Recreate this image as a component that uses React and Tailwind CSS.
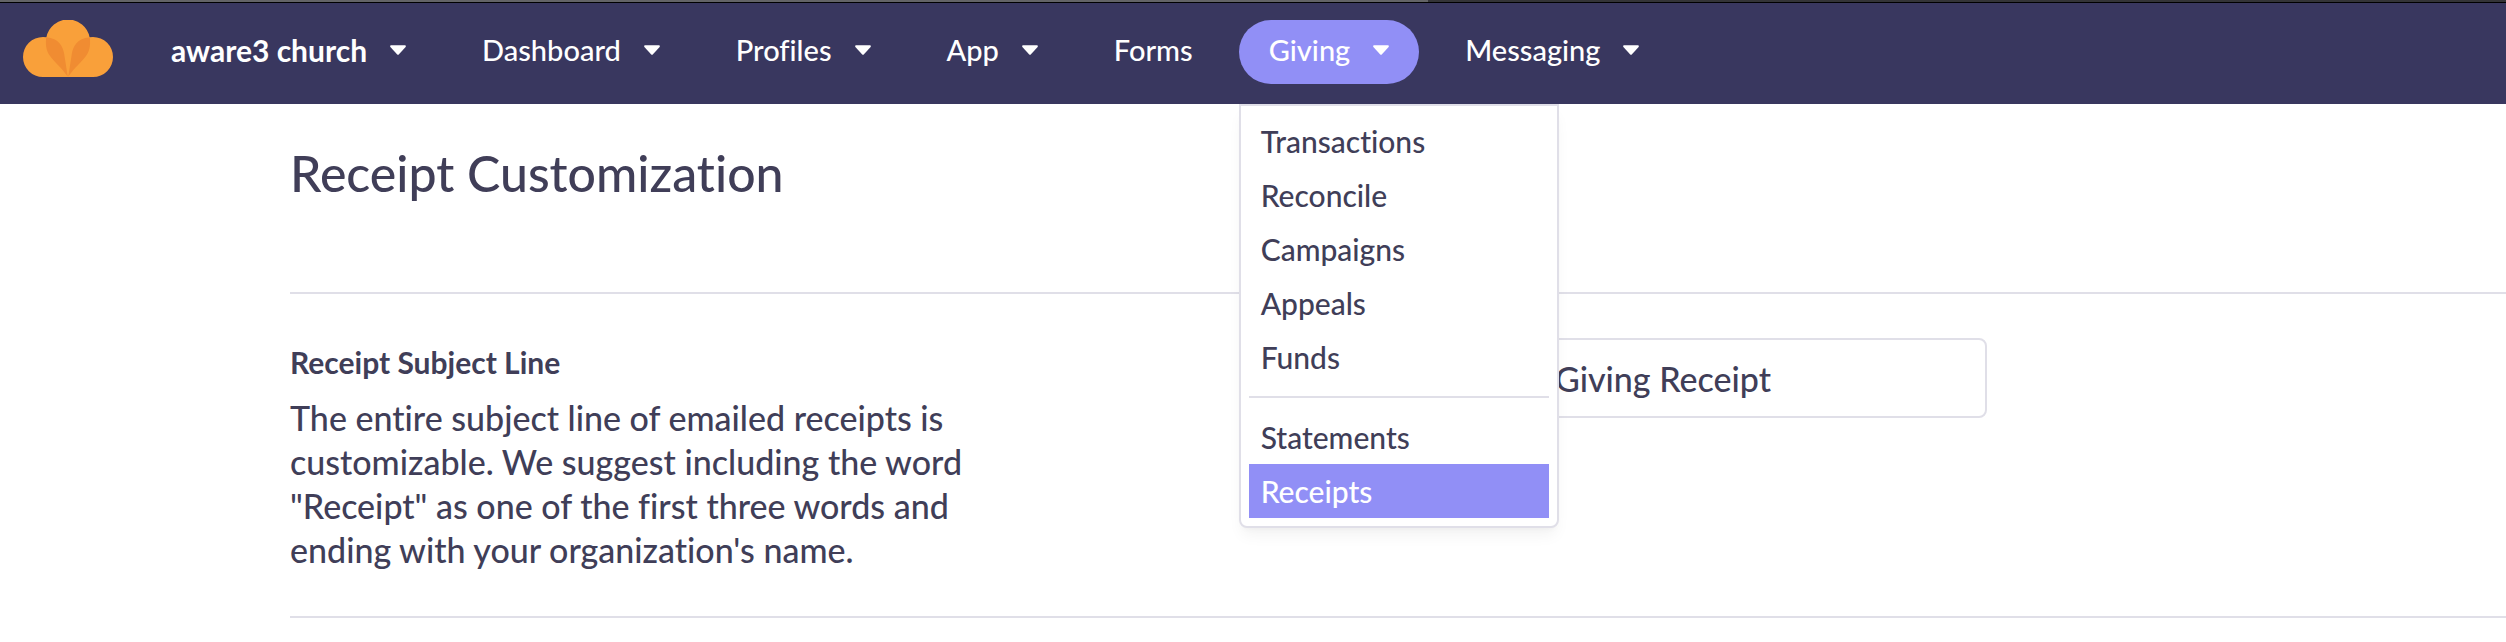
import { useState } from 'react';

const navItems = [
  { label: 'Dashboard', menu: true },
  { label: 'Profiles', menu: true },
  { label: 'App', menu: true },
  { label: 'Forms', menu: false },
  {
    label: 'Giving',
    menu: true,
    groups: [
      ['Transactions', 'Reconcile', 'Campaigns', 'Appeals', 'Funds'],
      ['Statements', 'Receipts'],
    ],
  },
  { label: 'Messaging', menu: true },
];

function Logo() {
  return (
    <svg viewBox="0 0 90 58" className="h-[58px] w-[90px]" aria-hidden="true">
      <path
        d="M20 57a20 20 0 0 1 0-40q1.700 0 3.400.3a22 22 0 0 1 43.200 0q1.700-.3 3.400-.3a20 20 0 0 1 0 40z"
        fill="#f9a03a"
      />
      <path d="M23.200 17.300C36 18 40 27 41.200 34L44.700 56.500C38 47 31 42 26 34.500C23 30 22.500 24 23.200 17.300z" fill="#f08c32" />
      <path d="M66.800 17.300C54 18 50 27 48.800 34L45.300 56.500C52 47 59 42 64 34.500C67 30 67.500 24 66.800 17.300z" fill="#f08c32" />
    </svg>
  );
}

function Caret() {
  return (
    <svg viewBox="0 0 16 10" className="h-[10px] w-4" aria-hidden="true">
      <path d="M1.200.3h13.600c.9 0 1.400 1 .8 1.700L9 9.200a1.400 1.400 0 0 1-2 0L.4 2C-.2 1.300.3.3 1.200.3z" fill="currentColor" />
    </svg>
  );
}

function Menu({ groups, current }) {
  return (
    <div className="absolute left-0 top-full z-10 mt-5 w-80 rounded-b-lg border-2 border-[#e0dfe8] bg-white p-2 text-[#403e58] shadow-lg shadow-black/5">
      {groups.map((group, i) => (
        <ul key={i} className={i > 0 ? 'mt-3 border-t-2 border-[#e0dfe8] pt-3' : ''}>
          {group.map((item) => (
            <li key={item}>
              <a
                href="#"
                className={`block px-3 text-[30px] leading-[54px] ${item === current ? 'bg-[#918ff6] text-white' : ''}`}
              >
                {item}
              </a>
            </li>
          ))}
        </ul>
      ))}
    </div>
  );
}

export default function App() {
  const [open, setOpen] = useState('Giving');
  const [subject, setSubject] = useState('Giving Receipt');

  return (
    <div className="min-h-screen bg-white font-['Lato',sans-serif] font-medium text-[#403e58] [font-variant-ligatures:none]">
      <div className="flex h-[3px] border-b border-black bg-[#343437]">
        <div className="w-[57%] bg-[#636366]" />
      </div>
      <header className="flex items-start bg-[#39375f] pb-5 pl-[23px] pt-[17px] text-white">
        <a href="#" aria-label="Home">
          <Logo />
        </a>
        <nav className="ml-7 flex items-center gap-4 text-[29px]">
          <button className="flex h-16 items-center gap-[23px] rounded-full px-[30px] pb-1 text-[30px] font-bold">
            aware3 church
            <Caret />
          </button>
          {navItems.map(({ label, menu, groups }) => (
            <div key={label} className="relative">
              {menu ? (
                <button
                  onClick={() => setOpen(open === label ? '' : label)}
                  className={`flex h-16 items-center gap-[23px] rounded-full px-[30px] pb-1 ${open === label ? 'bg-[#918ff6]' : ''}`}
                >
                  {label}
                  <Caret />
                </button>
              ) : (
                <a href="#" className="flex h-16 items-center px-[30px] pb-1">
                  {label}
                </a>
              )}
              {groups && open === label && <Menu groups={groups} current="Receipts" />}
            </div>
          ))}
        </nav>
      </header>

      <main className="pl-[290px]">
        <h1 className="pb-[86px] pt-9 text-[50px] leading-[66px]">Receipt Customization</h1>
        <section className="flex border-y-2 border-[#e0dfe8] pb-11 pt-11">
          <div className="w-[56%]">
            <label htmlFor="subject" className="block text-[30px] font-bold leading-[48px]">
              Receipt Subject Line
            </label>
            <p className="mt-[10px] max-w-[690px] text-[34px] leading-[44px]">
              The entire subject line of emailed receipts is customizable. We suggest including the word
              "Receipt" as one of the first three words and ending with your organization's name.
            </p>
          </div>
          <input
            id="subject"
            type="text"
            value={subject}
            onChange={(e) => setSubject(e.target.value)}
            className="h-20 w-[456px] rounded-lg border-2 border-[#e0dfe8] px-[22px] text-[34px]"
          />
        </section>
      </main>
    </div>
  );
}
